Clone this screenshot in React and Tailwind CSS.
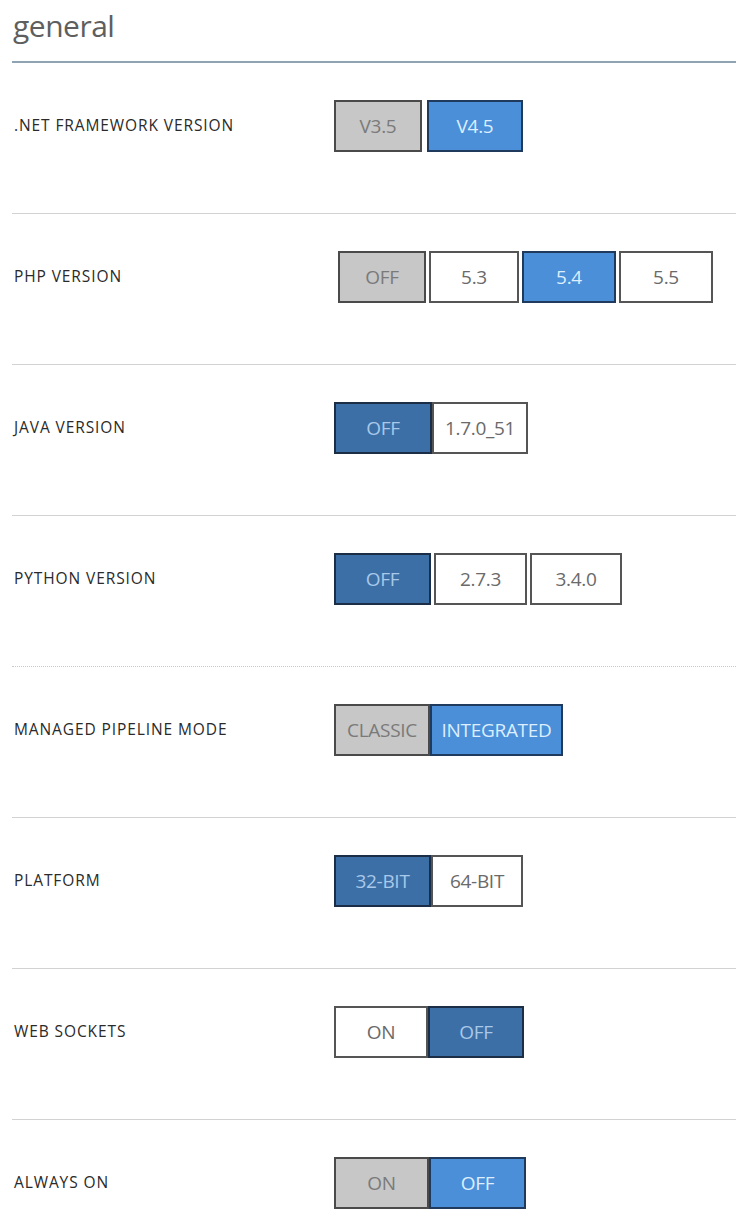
import React from 'react';

const styles = {
    gray: 'bg-[#c7c7c7] border-[#4a4a4a] text-[#7a7a7a]',
    blue: 'bg-[#4a8fd8] border-[#1f3a5c] text-[#dceeff]',
    navy: 'bg-[#3b6fa6] border-[#1b2e45] text-[#a9c8ea]',
    white: 'bg-white border-[#555555] text-[#6a6a6a]',
};

const rows = [
    { label: '.NET FRAMEWORK VERSION', gap: 'gap-[5px]', opts: [['V3.5', 'gray', 'w-[88px]'], ['V4.5', 'blue', 'w-[96px]']] },
    { label: 'PHP VERSION', gap: 'gap-[3px]', indent: 'ml-[4px]', opts: [['OFF', 'gray', 'w-[88px]'], ['5.3', 'white', 'w-[90px]'], ['5.4', 'blue', 'w-[94px]'], ['5.5', 'white', 'w-[94px]']] },
    { label: 'JAVA VERSION', gap: 'gap-0', opts: [['OFF', 'navy', 'w-[98px]'], ['1.7.0_51', 'white', 'w-[96px]']] },
    { label: 'PYTHON VERSION', gap: 'gap-[3px]', opts: [['OFF', 'navy', 'w-[97px]'], ['2.7.3', 'white', 'w-[93px]'], ['3.4.0', 'white', 'w-[92px]']], dotted: true },
    { label: 'MANAGED PIPELINE MODE', gap: 'gap-0', opts: [['CLASSIC', 'gray', 'w-[96px]'], ['INTEGRATED', 'blue', 'w-[133px]']] },
    { label: 'PLATFORM', gap: 'gap-0', opts: [['32-BIT', 'navy', 'w-[97px]'], ['64-BIT', 'white', 'w-[92px]']] },
    { label: 'WEB SOCKETS', gap: 'gap-0', opts: [['ON', 'white', 'w-[94px]'], ['OFF', 'navy', 'w-[96px]']] },
    { label: 'ALWAYS ON', gap: 'gap-0', opts: [['ON', 'gray', 'w-[95px]'], ['OFF', 'blue', 'w-[97px]']], last: true },
];

export default function App() {
    return (
        <div className="w-[748px] h-[1218px] overflow-hidden bg-white pl-[12px] pr-[12px] font-['Open_Sans',sans-serif]">
            <div className="pt-[6px] pl-[1px] h-[61px] text-[30px] leading-[40px] text-[#5e5e5e] tracking-[-0.5px]">general</div>
            <div className="h-[2px] bg-[#8ea4b4]" />

            {rows.map((row) => (
                <div key={row.label}>
                    <div className="flex items-center pt-[37px] pb-[61px]">
                        <div className="w-[322px] pl-[2px] text-[15.5px] text-[#2a2a2a] tracking-[0.9px]">{row.label}</div>
                        <div className={`flex ${row.gap} ${row.indent || ''}`}>
                            {row.opts.map(([text, kind, w]) => (
                                <div
                                    key={text}
                                    className={`${w} h-[52px] border-2 flex items-center justify-center text-[19px] tracking-[-0.3px] ${styles[kind]}`}
                                >
                                    {text}
                                </div>
                            ))}
                        </div>
                    </div>
                    {!row.last && (
                        row.dotted
                            ? <div className="border-t border-dotted border-[#c8c8c8]" />
                            : <div className="h-px bg-[#d2d2d2]" />
                    )}
                </div>
            ))}
        </div>
    );
}
